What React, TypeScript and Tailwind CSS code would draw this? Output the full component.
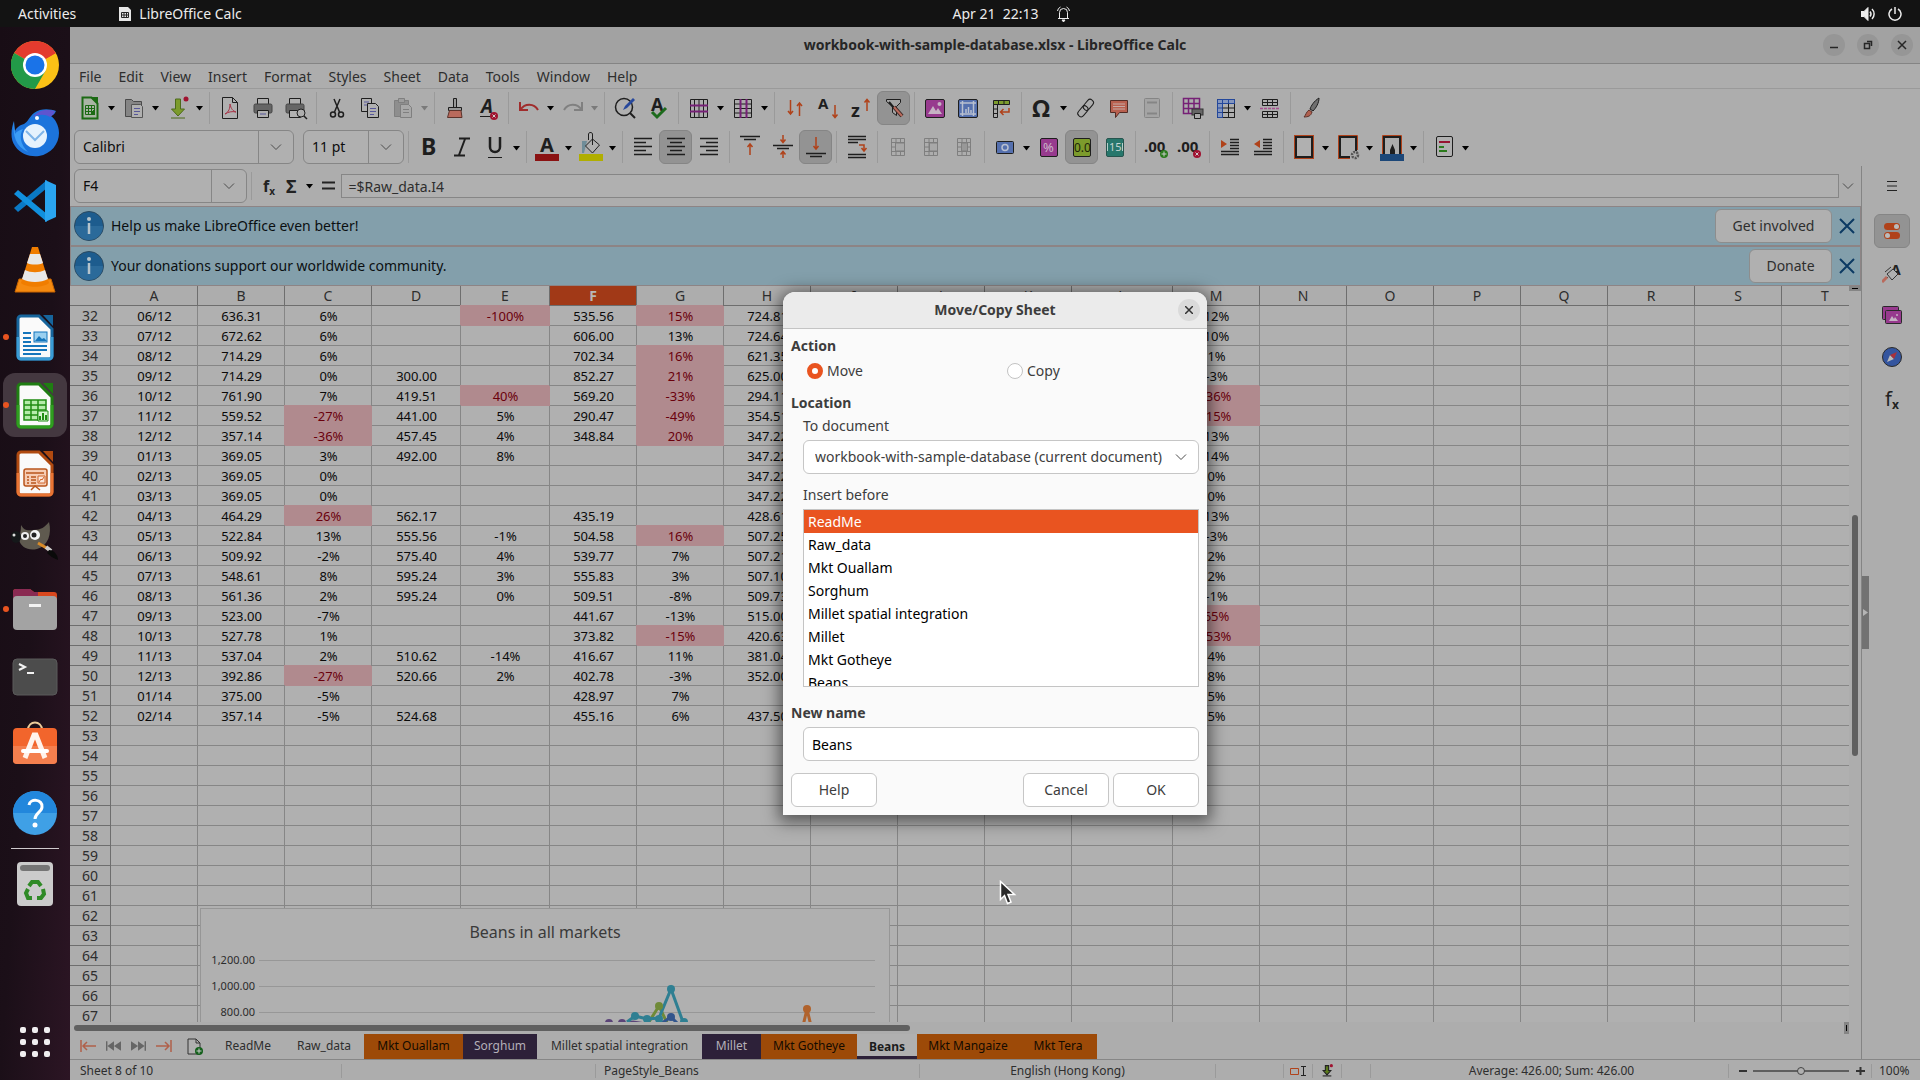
import { Fragment, ReactNode } from 'react';

interface Tool {
  icon: string;
  label: string;
  menu?: boolean;
  active?: boolean;
  dim?: boolean;
}

interface SheetTab {
  name: string;
  width: string;
  style: string;
}

const INK = '#1e1e1e';
const RUST = '#b0421a';

const sheetGrid = (stroke: string) => (
  <path d="M5.5 3.5h13v17h-13zM5.5 7.5h13M5.5 12h13M5.5 16.500h13M10 3.5v17M14.500 3.5v17" fill="none" stroke={stroke} />
);

const icons: Record<string, ReactNode> = {
  new: (
    <>
      <path d="M4.500 1.500h9l6 6v15h-15z" fill="#a9b5a4" stroke="#1c6a14" strokeWidth="2" />
      <path d="M12 1l8 7V1z" fill="#1c6a14" />
      <path d="M7.500 9.500h9v9h-9zM7.500 12.500h9M7.500 15.500h9M10.500 9.500v9M13.500 9.500v9" fill="none" stroke="#1c6a14" />
      <path d="M13 19v-3h2v-2h2v5z" fill="#1c6a14" />
    </>
  ),
  open: (
    <>
      <path d="M3.500 20.500v-17h6l2 2h8v15z" fill="#858585" stroke="#4a4a4a" />
      <path d="M9.500 8.500h9l2 2v11h-11z" fill="#b0b0b0" stroke="#555" />
      <path d="M12 12.500h6M12 15.500h6M12 18.500h4" stroke="#57579a" />
    </>
  ),
  save: (
    <>
      <path d="M9.500 3h5v10h4l-6.500 7-6.500-7h4z" fill="#7c9b2c" stroke="#4d6a1a" />
      <path d="M5 22h14" stroke="#4d6a1a" />
      <circle cx="20" cy="3" r="2.500" fill="#a01230" />
    </>
  ),
  pdf: (
    <>
      <path d="M4.500 1.500h10l5 5v16h-15z" fill="#b0b0b0" stroke={INK} />
      <path d="M14.500 1.500v5h5" fill="none" stroke={INK} />
      <path d="M7 18c4-2 5-6 5-10 1 5 3 7 6 8-4-1-8 0-11 2z" fill="none" stroke="#a83246" />
    </>
  ),
  print: (
    <>
      <path d="M6.500 8V2.500h11V8" fill="#b0b0b0" stroke={INK} />
      <rect x="3" y="8" width="18" height="9" rx="1.500" fill="#666" stroke="#444" />
      <path d="M6.500 14.500h11v7h-11z" fill="#b0b0b0" stroke={INK} />
      <path d="M9 18h6" stroke="#57579a" />
    </>
  ),
  preview: (
    <>
      <path d="M5.500 8V2.500h11V8" fill="#b0b0b0" stroke={INK} />
      <rect x="2" y="8" width="18" height="9" rx="1.500" fill="#666" stroke="#444" />
      <path d="M5.500 14.500h11v7h-11z" fill="#b0b0b0" stroke={INK} />
      <circle cx="17" cy="17" r="4" fill="#adadad" stroke={INK} />
      <path d="M20 20l3 3" stroke={INK} strokeWidth="1.500" />
    </>
  ),
  cut: (
    <g fill="none" stroke={INK} strokeWidth="1.500">
      <path d="M9 3l5.500 13M15 3L9.500 16" />
      <circle cx="8" cy="18.500" r="2.500" />
      <circle cx="16" cy="18.500" r="2.500" />
    </g>
  ),
  copy: (
    <>
      <path d="M3.500 2.500h10v13h-10z" fill="#b0b0b0" stroke={INK} />
      <path d="M6 6h5M6 9h3" stroke="#57579a" />
      <path d="M9.500 7.500h8l3 3v11h-11z" fill="#b0b0b0" stroke={INK} />
      <path d="M12 12.500h6M12 15.500h6M12 18.500h4" stroke="#57579a" />
    </>
  ),
  paste: (
    <g stroke="#7f7f7f">
      <path d="M3.500 4.500h14v16h-14z" fill="#8e8e8e" />
      <path d="M7.500 2.500h6v4h-6z" fill="#9d9d9d" />
      <path d="M9.500 8.500h8l3 3v10h-11z" fill="#a8a8a8" />
      <path d="M12 13.500h6M12 16.500h6" />
    </g>
  ),
  brush: (
    <>
      <path d="M10.500 2.500h3v9h-3z" fill="#999" stroke={INK} />
      <path d="M5.500 11.500h13v3h-13z" fill="#999" stroke={INK} />
      <path d="M6.500 14.500h11.500l1 7H4.500z" fill="#b96a5c" stroke="#5c332b" />
    </>
  ),
  clear: (
    <>
      <text x="5" y="17" fontSize="19" fontWeight="700" fontStyle="italic" fill={INK}>A</text>
      <path d="M4 20.500h12" stroke={INK} />
      <circle cx="18" cy="20" r="4" fill="#a01230" />
      <path d="M16.500 18.500l3 3m0-3l-3 3" stroke="#ccc" />
    </>
  ),
  undo: <path d="M3 6v8h8M3.500 13.500C8 7 17 7 21 14" fill="none" stroke="#a02c2c" strokeWidth="2" />,
  redo: <path d="M21 6v8h-8M20.500 13.500C16 7 7 7 3 14" fill="none" stroke="#808080" strokeWidth="2" />,
  find: (
    <>
      <circle cx="11" cy="11" r="8.500" fill="#b0b0b0" stroke={INK} strokeWidth="1.500" />
      <path d="M17 17l5 5" stroke={INK} strokeWidth="2" />
      <path d="M10 14l2-4 8-8 2 2-8 8z" fill="#27489c" />
    </>
  ),
  spell: (
    <>
      <text x="5" y="15" fontSize="18" fontWeight="700" fill={INK}>A</text>
      <path d="M6 16l5 5 9-9" fill="none" stroke="#1d6b1d" strokeWidth="3" />
    </>
  ),
  rows: (
    <>
      <path d="M3.500 3.500h17v18h-17zM7.500 3.500v18M12 3.500v18M16.500 3.500v18" fill="none" stroke={INK} />
      <path d="M3 9.500h18M3 15.500h18" stroke="#762076" strokeWidth="2" />
    </>
  ),
  cols: (
    <>
      <path d="M3.500 3.500h17v18h-17zM3.500 8h17M3.500 12.500h17M3.500 17h17" fill="none" stroke={INK} />
      <path d="M9.500 3v19M15.500 3v19" stroke="#762076" strokeWidth="2" />
    </>
  ),
  sort: <path d="M7.500 4v14M5 15l2.500 3 2.500-3M16.500 20V7M14 10l2.500-3 2.500 3" fill="none" stroke={RUST} strokeWidth="1.500" />,
  asc: (
    <>
      <text x="2" y="13" fontSize="15" fontWeight="700" fill={INK}>A</text>
      <path d="M19 9v13M16.500 18.500l2.500 3 2.500-3" fill="none" stroke={RUST} strokeWidth="1.500" />
    </>
  ),
  desc: (
    <>
      <text x="2" y="21" fontSize="18" fontWeight="700" fill={INK}>z</text>
      <path d="M18 15V3M15.500 6.500l2.500-3 2.500 3" fill="none" stroke={RUST} strokeWidth="1.500" />
    </>
  ),
  filter: (
    <>
      <path d="M4.500 3.500h14v3l-4 4v9l-4-3v-6l-6-5z" fill="#a5a5a5" stroke={INK} />
      <path d="M7 6l5 6" stroke={INK} strokeWidth="2" />
      <path d="M12 11l8 9" stroke="#3b2724" strokeWidth="4" />
      <path d="M12 11l8 9" stroke="#b96a5c" strokeWidth="2" />
    </>
  ),
  image: (
    <>
      <rect x="2.500" y="3.500" width="19" height="18" rx="1.500" fill="#973a8e" stroke={INK} />
      <path d="M5 18l5-8 3 5 2-3 4 6z" fill="#c5b2c3" />
      <circle cx="16.500" cy="8" r="2" fill="#c5b2c3" />
    </>
  ),
  chart: (
    <>
      <rect x="2.500" y="3.500" width="19" height="18" rx="1.500" fill="#5570ae" stroke={INK} />
      <path d="M4 7h16M4 18h16M6.500 5v15M17.500 5v15M10 17v-4M12.500 17v-6M15 17v-3" stroke="#b9c0d0" strokeWidth="1.500" />
    </>
  ),
  pivot: (
    <>
      <path d="M4.500 4.500h16v4h-16z" fill="#7c9b2c" stroke={INK} />
      <path d="M4.500 8.500h4v13h-4zM4.500 13h4M4.500 17.500h4M9.500 4.500v4M15 4.500v4" fill="none" stroke={INK} />
      <path d="M20 12v4h-8M14.500 13l-3 3 3 3" fill="none" stroke={RUST} strokeWidth="1.500" />
    </>
  ),
  omega: <text x="2" y="21" fontSize="24" fontWeight="700" fill={INK}>Ω</text>,
  link: (
    <g transform="rotate(-50 12 12)" fill="none" stroke={INK}>
      <rect x="1.500" y="8.500" width="12" height="6.500" rx="3" />
      <rect x="10" y="8.500" width="12" height="6.500" rx="3" />
    </g>
  ),
  comment: (
    <>
      <path d="M3.500 4.500h17v12h-8l-4 5v-5h-5z" fill="#b8604f" stroke="#522c25" />
      <path d="M6 8h12M6 10.500h12M6 13h12" stroke="#c5aaa5" />
    </>
  ),
  headfoot: (
    <g stroke="#858585" fill="none">
      <rect x="4.500" y="2.500" width="15" height="19" rx="1" fill="#a4a4a4" />
      <path d="M7 6.500h10M7 17.500h10" strokeWidth="2" />
    </g>
  ),
  printarea: (
    <>
      <path d="M2.500 2.500h16v15h-16zM2.500 7.500h16M2.500 12.500h16M7.500 2.500v15M13 2.500v15" fill="none" stroke="#762076" strokeWidth="1.500" />
      <rect x="11" y="13" width="11" height="6" fill="#666" stroke="#333" />
      <path d="M13.500 17.500h6v5h-6z" fill="#aaa" stroke={INK} />
    </>
  ),
  freeze: (
    <>
      <rect x="3.500" y="3.500" width="17" height="18" fill="#b0b0b0" stroke={INK} />
      <path d="M3.500 3.500h17v4h-17zM3.500 7.500h5v14h-5z" fill="#8496be" stroke="#24489c" />
      <path d="M8.500 12h12M8.500 16.500h12M14.500 7.500v14" stroke={INK} />
      <path d="M3.500 12h5M3.500 16.500h5M8.500 3.500v4M14.500 3.500v4" stroke="#24489c" />
    </>
  ),
  split: (
    <>
      <path d="M4.500 3.500h15v6h-15zM9.500 3.500v6M14.500 3.500v6M4.500 6.500h15M4.500 15.500h15v6h-15zM9.500 15.500v6M14.500 15.500v6M4.500 18.500h15" fill="none" stroke={INK} />
      <path d="M2 12.500h20" stroke="#a7508f" strokeDasharray="3 1" strokeWidth="1.500" />
    </>
  ),
  draw: (
    <>
      <path d="M20 2c-5 3-8 8-9 11l3 2c3-3 6-8 6-13z" fill="#707070" stroke={INK} />
      <path d="M10 14l3 2c-1 4-4 5-8 5 2-2 2-5 5-7z" fill="#b0604f" stroke="#5c332b" />
    </>
  ),
  bold: <text x="4" y="20" fontSize="23" fontWeight="700" fill={INK}>B</text>,
  italic: <path d="M9 3.500h11M4 20.500h11M15 4l-6 16" stroke={INK} strokeWidth="2" />,
  underline: (
    <>
      <path d="M7 2v10a5 5 0 0 0 10 0V2" fill="none" stroke={INK} strokeWidth="2.500" />
      <path d="M5 22.500h14" stroke={INK} />
    </>
  ),
  fontcolor: (
    <>
      <text x="5" y="17" fontSize="20" fontWeight="700" fill={INK}>A</text>
      <path d="M0 19h24v7H0z" fill="#8a1212" />
    </>
  ),
  fill: (
    <>
      <path d="M3 6h5l-3 12H3z" fill="#6f8d99" />
      <path d="M6.500 11l7-7 7 6-7 8zM13.500 10V0a2 2 0 0 0-4-1v6" fill="#b0b0b0" stroke={INK} />
      <path d="M0 19h24v7H0z" fill="#b0ae00" />
    </>
  ),
  left: <path d="M3 3.500h18M3 7.500h12M3 11.500h18M3 15.500h12M3 19.500h18" stroke={INK} strokeWidth="1.500" />,
  center: <path d="M3 3.500h18M6 7.500h12M3 11.500h18M6 15.500h12M3 19.500h18" stroke={INK} strokeWidth="1.500" />,
  right: <path d="M3 3.500h18M9 7.500h12M3 11.500h18M9 15.500h12M3 19.500h18" stroke={INK} strokeWidth="1.500" />,
  top: (
    <>
      <path d="M2 1.500h20M6 4.500h12" stroke={INK} strokeWidth="1.500" />
      <path d="M12 20V9M9.500 12l2.500-3 2.500 3" fill="none" stroke={RUST} strokeWidth="1.500" />
    </>
  ),
  middle: (
    <>
      <path d="M2 10.500h20M6 13.500h12" stroke={INK} strokeWidth="1.500" />
      <path d="M12 0v7M9.500 4.500l2.500 3 2.500-3M12 23v-6M9.500 19.500l2.500-3 2.500 3" fill="none" stroke={RUST} strokeWidth="1.500" />
    </>
  ),
  bottom: (
    <>
      <path d="M2 18.500h20M6 21.500h12" stroke={INK} strokeWidth="1.500" />
      <path d="M12 2v12M9.500 11l2.500 3 2.500-3" fill="none" stroke={RUST} strokeWidth="1.500" />
    </>
  ),
  wrap: (
    <>
      <path d="M3 1.500h18M3 4.500h18M3 7.500h10M3 19.500h18M3 22.500h18" stroke={INK} strokeWidth="1.500" />
      <path d="M14 10h5v5M16.500 13l2.500 3 2.500-3" fill="none" stroke={RUST} strokeWidth="1.500" />
    </>
  ),
  merge1: (
    <>
      {sheetGrid('#7f7f7f')}
      <path d="M9.500 8h9v8h-9z" fill="#a8a8a8" stroke="#7f7f7f" />
    </>
  ),
  merge2: (
    <>
      {sheetGrid('#7f7f7f')}
      <path d="M10.500 8h8v8h-8z" fill="#a8a8a8" stroke="#7f7f7f" />
    </>
  ),
  merge3: (
    <>
      {sheetGrid('#7f7f7f')}
      <path d="M9.500 8h6v8h-6z" fill="#989898" stroke="#7f7f7f" />
    </>
  ),
  currency: (
    <>
      <rect x="3.500" y="6.500" width="17" height="12" rx="1" fill="#5570ae" stroke={INK} />
      <circle cx="12" cy="12.500" r="3" fill="none" stroke="#b9c0d0" strokeWidth="1.500" />
    </>
  ),
  percent: (
    <>
      <rect x="3.500" y="3.500" width="17" height="18" rx="1.500" fill="#973a8e" stroke={INK} />
      <text x="6" y="17" fontSize="13" fill="#c9b6c7">%</text>
    </>
  ),
  number: (
    <>
      <rect x="3.500" y="3.500" width="17" height="18" rx="1.500" fill="#7c9b2c" stroke={INK} />
      <text x="4" y="17" fontSize="12" fill="#1c2408">0.0</text>
    </>
  ),
  date: (
    <>
      <rect x="3.500" y="3.500" width="17" height="18" rx="1.500" fill="#27776c" stroke="#27554e" />
      <path d="M4.500 8v8M19.500 8v8" stroke="#b5cfcb" />
      <text x="6" y="16" fontSize="11" fill="#c5d5d2">15</text>
    </>
  ),
  adddec: (
    <>
      <text x="0" y="17" fontSize="15" fontWeight="700" fill={INK}>.00</text>
      <circle cx="20" cy="19" r="4" fill="#2b7a1c" />
      <path d="M17.500 19h5M20 16.500v5" stroke="#ccc" />
    </>
  ),
  deldec: (
    <>
      <text x="0" y="17" fontSize="15" fontWeight="700" fill={INK}>.00</text>
      <circle cx="20" cy="19" r="4" fill="#a01230" />
      <path d="M18.500 17.500l3 3m0-3l-3 3" stroke="#ccc" />
    </>
  ),
  indent: (
    <>
      <path d="M12 4.500h9M12 7.500h9M12 10.500h9M12 13.500h9M3 16.500h18M3 19.500h18" stroke={INK} strokeWidth="1.500" />
      <path d="M3 5l6 4-6 4z" fill={RUST} />
    </>
  ),
  outdent: (
    <>
      <path d="M12 4.500h9M12 7.500h9M12 10.500h9M12 13.500h9M3 16.500h18M3 19.500h18" stroke={INK} strokeWidth="1.500" />
      <path d="M9 5L3 9l6 4z" fill={RUST} />
    </>
  ),
  borders: (
    <>
      <rect x="2" y="0" width="20" height="24" fill={RUST} />
      <rect x="4" y="2" width="16" height="20" fill="#b0b0b0" stroke={INK} strokeWidth="2" />
    </>
  ),
  bstyle: (
    <>
      <path d="M2.500 24V.500h19V15M2 23.500h12" fill="none" stroke={RUST} />
      <path d="M4 22V2h16v14M3 22h11" fill="none" stroke={INK} strokeWidth="2" />
      <circle cx="19" cy="20" r="3" fill="none" stroke="#555" strokeWidth="2.500" strokeDasharray="2 1" />
    </>
  ),
  bcolor: (
    <>
      <path d="M2.500 19V.500h19V19" fill="none" stroke={RUST} />
      <path d="M4 19V2h16v17" fill="none" stroke={INK} strokeWidth="2" />
      <path d="M12.500 9l2.500 6v4h-5v-4z" fill={INK} />
      <path d="M0 19h24v7H0z" fill="#1c4778" />
    </>
  ),
  cond: (
    <>
      <rect x="4.500" y="1.500" width="16" height="20" rx="1.500" fill="#b0b0b0" stroke={INK} />
      <path d="M7 7h11" stroke="#961230" strokeWidth="2" />
      <path d="M7 12h5M7 16h8" stroke="#2b7a1c" strokeWidth="2" />
    </>
  ),
};

const mainTools: (Tool | null)[] = [
  { icon: 'new', label: 'New', menu: true },
  { icon: 'open', label: 'Open', menu: true },
  { icon: 'save', label: 'Save', menu: true },
  null,
  { icon: 'pdf', label: 'Export as PDF' },
  { icon: 'print', label: 'Print' },
  { icon: 'preview', label: 'Print Preview' },
  null,
  { icon: 'cut', label: 'Cut' },
  { icon: 'copy', label: 'Copy' },
  { icon: 'paste', label: 'Paste', menu: true, dim: true },
  null,
  { icon: 'brush', label: 'Clone Formatting' },
  { icon: 'clear', label: 'Clear Formatting' },
  null,
  { icon: 'undo', label: 'Undo', menu: true },
  { icon: 'redo', label: 'Redo', menu: true, dim: true },
  null,
  { icon: 'find', label: 'Find and Replace' },
  { icon: 'spell', label: 'Spelling' },
  null,
  { icon: 'rows', label: 'Row', menu: true },
  { icon: 'cols', label: 'Column', menu: true },
  null,
  { icon: 'sort', label: 'Sort' },
  { icon: 'asc', label: 'Sort Ascending' },
  { icon: 'desc', label: 'Sort Descending' },
  { icon: 'filter', label: 'AutoFilter', active: true },
  null,
  { icon: 'image', label: 'Insert Image' },
  { icon: 'chart', label: 'Insert Chart' },
  { icon: 'pivot', label: 'Pivot Table' },
  null,
  { icon: 'omega', label: 'Special Character', menu: true },
  { icon: 'link', label: 'Hyperlink' },
  { icon: 'comment', label: 'Comment' },
  { icon: 'headfoot', label: 'Headers and Footers' },
  null,
  { icon: 'printarea', label: 'Define Print Area' },
  { icon: 'freeze', label: 'Freeze Rows and Columns', menu: true },
  { icon: 'split', label: 'Split Window' },
  null,
  { icon: 'draw', label: 'Show Draw Functions' },
];

const formatTools: (Tool | null)[] = [
  null,
  { icon: 'bold', label: 'Bold' },
  { icon: 'italic', label: 'Italic' },
  { icon: 'underline', label: 'Underline', menu: true },
  null,
  { icon: 'fontcolor', label: 'Font Color', menu: true },
  { icon: 'fill', label: 'Background Color', menu: true },
  null,
  { icon: 'left', label: 'Align Left' },
  { icon: 'center', label: 'Center Horizontally', active: true },
  { icon: 'right', label: 'Align Right' },
  null,
  { icon: 'top', label: 'Align Top' },
  { icon: 'middle', label: 'Center Vertically' },
  { icon: 'bottom', label: 'Align Bottom', active: true },
  null,
  { icon: 'wrap', label: 'Wrap Text' },
  null,
  { icon: 'merge1', label: 'Merge and Center' },
  { icon: 'merge2', label: 'Merge Cells' },
  { icon: 'merge3', label: 'Unmerge Cells' },
  null,
  { icon: 'currency', label: 'Currency', menu: true },
  { icon: 'percent', label: 'Percent' },
  { icon: 'number', label: 'Number', active: true },
  { icon: 'date', label: 'Date' },
  null,
  { icon: 'adddec', label: 'Add Decimal Place' },
  { icon: 'deldec', label: 'Delete Decimal Place' },
  null,
  { icon: 'indent', label: 'Increase Indent' },
  { icon: 'outdent', label: 'Decrease Indent' },
  null,
  { icon: 'borders', label: 'Borders', menu: true },
  { icon: 'bstyle', label: 'Border Style', menu: true },
  { icon: 'bcolor', label: 'Border Color', menu: true },
  null,
  { icon: 'cond', label: 'Conditional', menu: true },
];

const menus = ['File', 'Edit', 'View', 'Insert', 'Format', 'Styles', 'Sheet', 'Data', 'Tools', 'Window', 'Help'];

const columns = 'ABCDEFGHIJKLMNOPQRST'.split('');

// A..H, then M; a leading "!" marks a conditionally highlighted cell
const rows: string[][] = [
  ['06/12', '636.31', '6%', '', '!-100%', '535.56', '!15%', '724.81', '12%'],
  ['07/12', '672.62', '6%', '', '', '606.00', '13%', '724.64', '10%'],
  ['08/12', '714.29', '6%', '', '', '702.34', '!16%', '621.35', '1%'],
  ['09/12', '714.29', '0%', '300.00', '', '852.27', '!21%', '625.00', '-3%'],
  ['10/12', '761.90', '7%', '419.51', '!40%', '569.20', '!-33%', '294.11', '!-36%'],
  ['11/12', '559.52', '!-27%', '441.00', '5%', '290.47', '!-49%', '354.51', '!-15%'],
  ['12/12', '357.14', '!-36%', '457.45', '4%', '348.84', '!20%', '347.22', '13%'],
  ['01/13', '369.05', '3%', '492.00', '8%', '', '', '347.22', '14%'],
  ['02/13', '369.05', '0%', '', '', '', '', '347.22', '0%'],
  ['03/13', '369.05', '0%', '', '', '', '', '347.22', '0%'],
  ['04/13', '464.29', '!26%', '562.17', '', '435.19', '', '428.61', '13%'],
  ['05/13', '522.84', '13%', '555.56', '-1%', '504.58', '!16%', '507.25', '-3%'],
  ['06/13', '509.92', '-2%', '575.40', '4%', '539.77', '7%', '507.21', '2%'],
  ['07/13', '548.61', '8%', '595.24', '3%', '555.83', '3%', '507.10', '2%'],
  ['08/13', '561.36', '2%', '595.24', '0%', '509.51', '-8%', '509.73', '-1%'],
  ['09/13', '523.00', '-7%', '', '', '441.67', '-13%', '515.00', '!65%'],
  ['10/13', '527.78', '1%', '', '', '373.82', '!-15%', '420.63', '!-53%'],
  ['11/13', '537.04', '2%', '510.62', '-14%', '416.67', '11%', '381.04', '4%'],
  ['12/13', '392.86', '!-27%', '520.66', '2%', '402.78', '-3%', '352.00', '8%'],
  ['01/14', '375.00', '-5%', '', '', '428.97', '7%', '', '5%'],
  ['02/14', '357.14', '-5%', '524.68', '', '455.16', '6%', '437.50', '5%'],
];

const ORANGE_TAB = 'bg-[#9d4a08] text-[#140a00]';
const PURPLE_TAB = 'bg-[#2d2139] text-[#b4b0b8]';

const sheetTabs: SheetTab[] = [
  { name: 'ReadMe', width: 'w-[72px]', style: '' },
  { name: 'Raw_data', width: 'w-[80px]', style: '' },
  { name: 'Mkt Ouallam', width: 'w-[99px]', style: ORANGE_TAB },
  { name: 'Sorghum', width: 'w-[74px]', style: PURPLE_TAB },
  { name: 'Millet spatial integration', width: 'w-[165px]', style: '' },
  { name: 'Millet', width: 'w-[59px]', style: PURPLE_TAB },
  { name: 'Mkt Gotheye', width: 'w-[96px]', style: ORANGE_TAB },
  { name: 'Beans', width: 'w-[60px]', style: 'border-b-3 border-[#2d2139] bg-[#b0b0b0] pt-[3px] font-bold text-[#1c1c1c]' },
  { name: 'Mkt Mangaize', width: 'w-[102px]', style: ORANGE_TAB },
  { name: 'Mkt Tera', width: 'w-[78px]', style: ORANGE_TAB },
];

const insertBefore = ['ReadMe', 'Raw_data', 'Mkt Ouallam', 'Sorghum', 'Millet spatial integration', 'Millet', 'Mkt Gotheye', 'Beans'];

const officeDoc = (main: string, light: string, body: ReactNode) => (
  <>
    <path d="M10 3h18l13 13v27a3 3 0 0 1-3 3H10a3 3 0 0 1-3-3V6a3 3 0 0 1 3-3z" fill="#fafafa" stroke={main} strokeWidth="3" />
    <path d="M7 24v19a3 3 0 0 0 3 3h28a3 3 0 0 0 3-3V24" fill="none" stroke={light} strokeWidth="3" />
    <path d="M32 2h10v11z" fill={main} />
    {body}
  </>
);

const dockApps: { name: string; art: ReactNode; dot?: boolean; active?: boolean }[] = [
  {
    name: 'Google Chrome',
    art: (
      <>
        <circle cx="24" cy="24" r="24" fill="#fbc116" />
        <path d="M24 24L3.200 12A24 24 0 0 1 44.800 12z" fill="#e33b2e" />
        <path d="M24 24L3.200 12A24 24 0 0 0 24 48l10.400-18z" fill="#229a48" />
        <path d="M24 12h20.800L24 24z" fill="#e33b2e" />
        <circle cx="24" cy="24" r="12" fill="#fff" />
        <circle cx="24" cy="24" r="9.500" fill="#1a73e8" />
      </>
    ),
  },
  {
    name: 'Thunderbird',
    art: (
      <>
        <path d="M3 12c-3 8-4 18 1 25 6 9 16 11 24 10 12-2 20-12 20-23 0-8-4-14-8-17 3-1 4-3 5-5-6-2-15-3-22 2-5 4-6 9-10 11-4 1-8 4-9 7-1-3-1-6-1-10z" fill="#1c74dc" />
        <path d="M22 8c6-8 15-8 22-6-1 3-3 5-5 6-5-3-11-3-17 0z" fill="#5f55cf" />
        <path d="M3 12c-2 14 2 26 14 31-8-8-9-17-5-23-4 1-7 3-8 5z" fill="#3b9cf5" />
        <circle cx="24" cy="27" r="12" fill="#e6f2fd" />
        <path d="M15 22l9 9 9-9" fill="none" stroke="#7fb4e8" strokeWidth="2" />
        <circle cx="26" cy="9" r="2" fill="#fff" />
      </>
    ),
  },
  {
    name: 'Visual Studio Code',
    art: (
      <>
        <path d="M3 31l4 4 29-24V3z" fill="#0a78c4" />
        <path d="M3 17l4-4 29 24v8z" fill="#1190de" />
        <path d="M34 3l11 5v32l-11 5z" fill="#2aa5f0" />
      </>
    ),
  },
  {
    name: 'VLC media player',
    art: (
      <>
        <path d="M8 34h32l4 13H4z" fill="#f58a10" stroke="#c96500" />
        <path d="M21 2h6l11 36c-6 5-22 5-28 0z" fill="#f07d00" />
        <path d="M19 9h10l3 9c-4 2-12 2-16 0zM14 25c6 3 14 3 20 0l3 9c-7 4-19 4-26 0z" fill="#e8e8e8" />
      </>
    ),
  },
  {
    name: 'LibreOffice Writer',
    dot: true,
    art: officeDoc('#16659c', '#3a9bd4', (
      <>
        <path d="M12 20h8M12 25h8M12 29h8M12 33h24M12 37h24M12 41h18" stroke="#1575bb" strokeWidth="2" />
        <rect x="23" y="19" width="13" height="10" fill="#9bd0f0" stroke="#1575bb" />
        <path d="M24 28l4-5 3 3 2-1 3 3z" fill="#1575bb" />
      </>
    )),
  },
  {
    name: 'LibreOffice Calc',
    dot: true,
    active: true,
    art: officeDoc('#1f7d12', '#2f9e1f', (
      <>
        <path d="M13 19h22v20H13zM13 24h22M13 29h22M13 34h22M20 19v20M27 19v20" fill="#b5ecaa" stroke="#1f8c12" strokeWidth="1.500" />
        <path d="M27 30h10v10H27z" fill="#d5f5ce" stroke="#1f8c12" />
        <path d="M29 39v-4M32 39v-7M35 39v-5" stroke="#1f8c12" strokeWidth="2" />
      </>
    )),
  },
  {
    name: 'LibreOffice Impress',
    art: officeDoc('#b04a10', '#e87434', (
      <>
        <rect x="13" y="20" width="23" height="17" rx="2" fill="#f6cdb5" stroke="#b9551c" strokeWidth="1.500" />
        <path d="M15 24h18M16 28h2M20 28h5M16 31h2M20 31h5M16 34h2M20 34h5M20 41l4-4 5 4" fill="none" stroke="#b9551c" strokeWidth="1.500" />
        <path d="M27 27h7v7h-7zM28 33l2-3 1 1 2-3" fill="#fbe6da" stroke="#d0642a" />
      </>
    )),
  },
  {
    name: 'GIMP',
    art: (
      <>
        <path d="M10 8c3 5 6 6 12 5 8 0 12-3 16-8 3 12-1 24-12 27-9 2-16-2-18-9 1-6 2-9 2-15z" fill="#5f5a4f" />
        <ellipse cx="5" cy="20" rx="5" ry="6" fill="#15181a" />
        <circle cx="3" cy="18" r="1.500" fill="#ddd" />
        <circle cx="14" cy="19" r="4" fill="#eee" />
        <circle cx="14" cy="19" r="2" fill="#222" />
        <circle cx="24" cy="18" r="5" fill="#f4f4f4" />
        <circle cx="23" cy="18" r="2.500" fill="#222" />
        <path d="M27 26l12 7" stroke="#d98b28" strokeWidth="3" />
        <path d="M35 30l5 4" stroke="#ccc" strokeWidth="4" />
        <path d="M38 33c5 0 9 5 9 10-5-2-8-4-11-7z" fill="#0a0a0a" />
      </>
    ),
  },
  {
    name: 'Files',
    dot: true,
    art: (
      <>
        <path d="M2 12V7a3 3 0 0 1 3-3h14l4 3h20a3 3 0 0 1 3 3v6H2z" fill="#d9481e" />
        <path d="M2 12V7a3 3 0 0 1 3-3h14l4 3h4v9H2z" fill="#8a2a52" />
        <rect x="2" y="11" width="44" height="34" rx="4" fill="#a3a3a3" />
        <rect x="18" y="19" width="12" height="3" fill="#f2f2f2" />
      </>
    ),
  },
  {
    name: 'Terminal',
    art: (
      <>
        <rect x="2" y="6" width="44" height="36" rx="4" fill="#4c4c4c" stroke="#5a5a5a" />
        <path d="M8 11l6 3-6 3M16 20h7" fill="none" stroke="#f2f2f2" strokeWidth="2" />
      </>
    ),
  },
  {
    name: 'Ubuntu Software',
    art: (
      <>
        <path d="M17 9c0-10 14-10 14 0" fill="none" stroke="#eccb9a" strokeWidth="2" />
        <rect x="2" y="7" width="44" height="36" rx="4" fill="#f2652c" />
        <path d="M2 25h44v14a4 4 0 0 1-4 4H6a4 4 0 0 1-4-4z" fill="#f47f4e" />
        <path d="M14 37l9-23h2l9 23" fill="none" stroke="#fff3ec" strokeWidth="5" />
        <path d="M12 30h24" stroke="#fff" strokeWidth="4" strokeLinecap="round" />
      </>
    ),
  },
  {
    name: 'Help',
    art: (
      <>
        <circle cx="24" cy="24" r="22" fill="#3fa0e6" />
        <path d="M2 24a22 22 0 0 1 44 0z" fill="#2287dc" />
        <path d="M18 16c1-7 14-6 13 2 0 5-7 6-7 12" fill="none" stroke="#fff" strokeWidth="3" />
        <circle cx="24" cy="36" r="2.500" fill="#fff" />
      </>
    ),
  },
];

function ChevronDown() {
  return (
    <svg width="12" height="8" viewBox="0 0 12 8" fill="none" stroke="#4c4c4c">
      <path d="M1 1.500l5 5 5-5" />
    </svg>
  );
}

function Toolbar({ tools }: { tools: (Tool | null)[] }) {
  return (
    <>
      {tools.map((tool, i) =>
        tool === null ? (
          <span key={i} className="mr-[3px] ml-[4px] h-8 w-0 shrink-0 border-l border-[#9a9a9a]" />
        ) : (
          <Fragment key={tool.icon}>
            <button
              aria-label={tool.label}
              className={`flex h-[34px] w-[33px] shrink-0 items-center justify-center rounded-md ${tool.active ? 'border border-[#858585] bg-[#939393]' : ''}`}
            >
              <svg width="24" height="24" viewBox="0 0 24 24" overflow="visible">
                {icons[tool.icon]}
              </svg>
            </button>
            {tool.menu && (
              <button aria-label={`${tool.label} options`} className="flex h-[34px] w-[11px] shrink-0 items-center justify-center">
                <svg width="7" height="5" viewBox="0 0 7 5" className="mt-0.5">
                  <path d="M0 0h7L3.500 4.500z" fill={tool.dim ? '#7a7a7a' : '#000'} />
                </svg>
              </button>
            )}
          </Fragment>
        )
      )}
    </>
  );
}

function Combo({ label, value, width }: { label: string; value: string; width: string }) {
  return (
    <div className={`flex h-[34px] shrink-0 overflow-hidden rounded-md border border-[#868686] bg-[#b0b0b0] ${width}`}>
      <input aria-label={label} defaultValue={value} className="min-w-0 flex-1 bg-transparent px-2 text-[#0c0c0c] outline-none" />
      <button aria-label={`${label} list`} className="flex w-[35px] items-center justify-center border-l border-[#868686]">
        <ChevronDown />
      </button>
    </div>
  );
}

function InfoBar({ text, action, width }: { text: string; action: string; width: string }) {
  return (
    <div className="flex h-[40px] shrink-0 items-center border border-[#8d8485] bg-[#839fab] pr-[5px] pl-[3px] text-[#0b0f11]">
      <svg width="30" height="30" viewBox="0 0 30 30">
        <circle cx="15" cy="15" r="14.500" fill="#1d5c8e" stroke="#2c4a60" />
        <path d="M1 15a14 14 0 0 0 28 0z" fill="#2b6a9a" />
        <path d="M15 12v11" stroke="#b6c4cc" strokeWidth="2.500" />
        <circle cx="15" cy="8" r="2" fill="#b6c4cc" />
      </svg>
      <p className="ml-[7px] flex-1">{text}</p>
      <button className={`h-[34px] rounded-md border border-[#8d8d8d] bg-[#b0b0b0] text-[#2e2e2e] ${width}`}>{action}</button>
      <button aria-label="Close" className="ml-[7px]">
        <svg width="16" height="16" viewBox="0 0 16 16">
          <path d="M1 1l14 14M15 1L1 15" stroke="#0c3a63" strokeWidth="2" />
        </svg>
      </button>
    </div>
  );
}

function TopBar() {
  return (
    <header className="grid h-[27px] shrink-0 grid-cols-[1fr_auto_1fr] items-center bg-[#131313] text-[#ececec]">
      <div className="flex items-center pl-[18px]">
        <button>Activities</button>
        <button className="ml-[43px] flex items-center gap-2">
          <svg width="12" height="14" viewBox="0 0 12 14">
            <path d="M0 0h9l3 3v11H0z" fill="#e6e6e6" />
            <path d="M2.500 5.500h7v5h-7zM2.500 8h7M5 5.500v5M7.500 5.500v5" fill="none" stroke="#222" />
          </svg>
          LibreOffice Calc
        </button>
      </div>
      <button className="flex items-center gap-[18px] pl-[102px]">
        <span className="whitespace-pre">Apr 21  22:13</span>
        <svg width="13" height="16" viewBox="0 0 13 16" fill="none" stroke="#ececec">
          <path d="M1 12.500h11M2.500 12V6.500a4 4 0 0 1 8 0V12M.5 5a5 5 0 0 1 3-4M12.500 5a5 5 0 0 0-3-4" />
          <path d="M5 14h3l-1.500 2z" fill="#ececec" />
        </svg>
      </button>
      <div className="flex items-center justify-end gap-[12px] pr-[18px]">
        <svg width="15" height="14" viewBox="0 0 15 14" fill="none" stroke="#ececec">
          <path d="M0 4.500h3l4-4v13l-4-4H0z" fill="#ececec" />
          <path d="M9 4.500a4 4 0 0 1 0 5M11 2a7 7 0 0 1 0 10" strokeWidth="1.500" />
        </svg>
        <svg width="14" height="14" viewBox="0 0 14 14" fill="none" stroke="#ececec" strokeWidth="1.500">
          <path d="M4 2a6 6 0 1 0 6 0M7 0v7" />
        </svg>
      </div>
    </header>
  );
}

function Dock() {
  return (
    <nav aria-label="Dock" className="flex w-[70px] shrink-0 flex-col items-center bg-linear-to-br from-[#180d15] via-[#1b0f18] to-[#2c1524] pt-1">
      {dockApps.map((app) => (
        <button key={app.name} aria-label={app.name} className="relative flex h-[68px] w-full items-center justify-center">
          <span className={`flex size-16 items-center justify-center rounded-xl ${app.active ? 'bg-[#443840]' : ''}`}>
            <svg width="48" height="48" viewBox="0 0 48 48">
              {app.art}
            </svg>
          </span>
          {app.dot && <span className="absolute top-[31px] left-[3px] size-[6px] rounded-full bg-[#e95420]" />}
        </button>
      ))}
      <hr className="mt-px w-12 border-[#cfcacd]" />
      <button aria-label="Trash" className="mt-[11px]">
        <svg width="48" height="48" viewBox="0 0 48 48">
          <rect x="6" y="2" width="36" height="44" rx="4" fill="#cbcbcb" />
          <rect x="9" y="5" width="30" height="6" rx="3" fill="#757575" />
          <path d="M18 26l3-4h6l3 4M32 29l1 5-3 4h-4M21 38h-4l-2-5 2-4" fill="none" stroke="#2f8a26" strokeWidth="4" />
        </svg>
      </button>
      <button aria-label="Show Applications" className="mt-auto mb-[23px] grid grid-cols-3 gap-[6px]">
        {Array.from({ length: 9 }, (_, i) => (
          <span key={i} className="size-[6px] rounded-[2px] bg-[#f0eef0]" />
        ))}
      </button>
    </nav>
  );
}

function TitleBar() {
  return (
    <div className="grid h-[37px] shrink-0 grid-cols-[1fr_auto_1fr] items-center border-b border-[#848484] bg-[#a2a2a2] px-[7px]">
      <h1 className="col-start-2 font-bold text-[#262626]">workbook-with-sample-database.xlsx - LibreOffice Calc</h1>
      <div className="flex justify-end gap-[12px]">
        {['M8 14.500h8', 'M8.500 10.500h5v5h-5zM11 8.500h4.500v4.500', 'M8 8l8 8M16 8l-8 8'].map((d, i) => (
          <button key={d} aria-label={['Minimize', 'Restore', 'Close'][i]} className="size-[22px] rounded-full bg-[#969696]">
            <svg width="22" height="22" viewBox="1 1 22 22" fill="none" stroke="#262626" strokeWidth="1.500">
              <path d={d} />
            </svg>
          </button>
        ))}
      </div>
    </div>
  );
}

function FormulaBar() {
  return (
    <div className="flex h-[40px] shrink-0 items-center pl-1">
      <Combo label="Name Box" value="F4" width="w-[173px]" />
      <span className="mx-[4px] h-7 border-l border-[#9a9a9a]" />
      <button aria-label="Function Wizard" className="ml-[7px] w-[23px] text-left text-[16px] font-bold text-[#222]">
        f<sub className="text-[10px]">x</sub>
      </button>
      <button aria-label="Select Function" className="flex items-center gap-[10px] text-[18px] font-bold text-[#222]">
        Σ
        <svg width="7" height="5" viewBox="0 0 7 5">
          <path d="M0 0h7L3.500 4.500z" />
        </svg>
      </button>
      <button aria-label="Formula" className="ml-[9px]">
        <svg width="13" height="10" viewBox="0 0 13 10">
          <path d="M0 1.500h13M0 7.500h13" stroke="#222" strokeWidth="2" />
        </svg>
      </button>
      <input aria-label="Input line" defaultValue="=$Raw_data.I4" className="ml-[6px] h-[24px] min-w-0 flex-1 border border-[#868686] bg-[#b0b0b0] px-[6px] text-[#2e2e2e] outline-none" />
      <button aria-label="Expand Formula Bar" className="flex w-[22px] justify-center pr-1">
        <ChevronDown />
      </button>
    </div>
  );
}

function Cell({ value = '' }: { value?: string }) {
  const flagged = value.startsWith('!');
  return (
    <td
      className={`h-5 border-r border-b pt-px pr-0 pb-0 pl-px text-center text-[13px] leading-[18px] ${
        flagged
          ? 'border-[#b08a8e] bg-[#b08a8e] text-[#6a000c] shadow-[-1px_-1px_0_#b08a8e]'
          : 'border-[#868686] text-[#0a0a0a]'
      }`}
    >
      {flagged ? value.slice(1) : value}
    </td>
  );
}

function ChartBox() {
  return (
    <figure className="absolute top-[622px] left-[130px] h-[300px] w-[690px] border border-[#969696] bg-[#b0b0b0] text-[#3a3a3a]">
      <figcaption className="pt-[11px] text-center text-[16px] leading-6">Beans in all markets</figcaption>
      <svg width="688" height="120" viewBox="0 36 688 120" className="block">
        {['1,200.00', '1,000.00', '800.00'].map((label, i) => (
          <g key={label}>
            <text x="54" y={56 + i * 26} fontSize="11" textAnchor="end" fill="#2c2c2c">
              {label}
            </text>
            <path d={`M58 ${52.5 + i * 26}h616`} stroke="#979797" />
          </g>
        ))}
        <g fill="none" strokeWidth="3">
          <path d="M408 116l12 1 12-3 13 2" stroke="#5b4478" />
          <path d="M446 117l12-19 9 19" stroke="#6f8a38" />
          <path d="M458 117l12-8 10 10" stroke="#33558c" />
          <path d="M426 114l8-6 12 3 12-1 12-29 12 33" stroke="#2f7f92" />
          <path d="M602 118l4-17 4 17" stroke="#b0622c" />
        </g>
        <circle cx="408" cy="115" r="4" fill="#5b4478" />
        <circle cx="421" cy="115" r="4" fill="#5b4478" />
        <circle cx="458" cy="98" r="4" fill="#6f8a38" />
        <circle cx="470" cy="109" r="4" fill="#33558c" />
        <circle cx="434" cy="108" r="4" fill="#2f7f92" />
        <circle cx="446" cy="111" r="4" fill="#2f7f92" />
        <circle cx="458" cy="111" r="4" fill="#2f7f92" />
        <circle cx="470" cy="81" r="4" fill="#2f7f92" />
        <circle cx="483" cy="114" r="4" fill="#2f7f92" />
        <circle cx="606" cy="101" r="4" fill="#b0622c" />
      </svg>
    </figure>
  );
}

function SheetGrid() {
  return (
    <div className="flex min-h-0 flex-1">
      <div className="relative min-w-0 flex-1 overflow-hidden bg-[#b0b0b0]">
        <table className="w-[1787px] table-fixed border-separate border-spacing-0">
          <colgroup>
            <col className="w-[41px]" />
            {columns.map((c) => (
              <col key={c} className={c === 'D' || c === 'E' ? 'w-[89px]' : c === 'L' ? 'w-[101px]' : 'w-[87px]'} />
            ))}
          </colgroup>
          <thead>
            <tr className="h-5 bg-[#adadad] text-[14px] leading-[19px] text-[#2e2e2e]">
              <th className="border-r border-b border-[#6e6e6e] p-0" />
              {columns.map((c) => (
                <th
                  key={c}
                  scope="col"
                  className={`border-r border-b border-[#6e6e6e] p-0 ${c === 'F' ? 'bg-[#a13917] font-bold text-[#b8b8b8]' : 'font-normal'}`}
                >
                  {c}
                </th>
              ))}
            </tr>
          </thead>
          <tbody>
            {Array.from({ length: 36 }, (_, i) => {
              const row = rows[i] ?? [];
              return (
                <tr key={i} className="h-5">
                  <th scope="row" className="border-r border-b border-[#6e6e6e] bg-[#adadad] p-0 text-[14px] leading-[19px] font-normal text-[#2e2e2e]">
                    {i + 32}
                  </th>
                  {columns.map((c, j) => (
                    <Cell key={c} value={j < 8 ? row[j] : c === 'M' ? row[8] : ''} />
                  ))}
                </tr>
              );
            })}
          </tbody>
        </table>
        <ChartBox />
      </div>
      <div className="flex w-[12px] shrink-0 flex-col items-center">
        <span className="flex h-[5px] w-full items-center justify-center bg-[#858585]">
          <span className="h-px w-[6px] bg-black" />
        </span>
        <span className="mt-[224px] h-[241px] w-[6px] rounded-full bg-[#606060]" />
      </div>
    </div>
  );
}

function SheetTabs() {
  return (
    <div className="flex h-[25px] shrink-0 items-stretch text-[12px] text-[#2e2e2e]">
      <div className="flex w-[142px] items-center gap-[10px] pb-px pl-[10px]">
        <button aria-label="First sheet">
          <svg width="16" height="12" viewBox="0 0 16 12" fill="none" stroke="#b0604a" strokeWidth="1.500">
            <path d="M1 0v12M3 6h13M7 2L3 6l4 4" />
          </svg>
        </button>
        <button aria-label="Previous sheet">
          <svg width="15" height="10" viewBox="0 0 16 10" fill="#666">
            <path d="M0 0h1.500v10H0zM8.500 0v10L1.500 5zM16 0v10L8.500 5z" />
          </svg>
        </button>
        <button aria-label="Next sheet">
          <svg width="15" height="10" viewBox="0 0 16 10" fill="#666">
            <path d="M16 0h-1.500v10H16zM7.500 0v10l7-5zM0 0v10l7.500-5z" />
          </svg>
        </button>
        <button aria-label="Last sheet">
          <svg width="16" height="12" viewBox="0 0 16 12" fill="none" stroke="#b0604a" strokeWidth="1.500">
            <path d="M15 0v12M13 6H0M9 2l4 4-4 4" />
          </svg>
        </button>
        <button aria-label="Add sheet" className="ml-[5px]">
          <svg width="16" height="17" viewBox="0 0 16 17">
            <path d="M1 1h8l4 4v11H1z" fill="#b0b0b0" stroke="#333" />
            <path d="M9 1v4h4" fill="none" stroke="#333" />
            <circle cx="12" cy="13" r="4" fill="#14601c" />
            <path d="M9.500 13h5M12 10.500v5" stroke="#ccc" />
          </svg>
        </button>
      </div>
      {sheetTabs.map((tab) => (
        <button key={tab.name} className={`shrink-0 pb-0.5 text-center whitespace-nowrap ${tab.width} ${tab.style}`}>
          {tab.name}
        </button>
      ))}
    </div>
  );
}

function SideBar() {
  return (
    <aside className="relative flex w-[59px] shrink-0 flex-col items-center border-l border-[#848484] pt-[2px] pl-[2px]">
      <button aria-label="Sidebar Settings" className="flex h-[36px] w-9 items-center justify-center">
        <svg width="10" height="10" viewBox="0 0 10 10" stroke="#222">
          <path d="M0 .5h10M0 5.000h10M0 9.500h10" />
        </svg>
      </button>
      <button aria-label="Properties" className="mt-[10px] flex h-[34px] w-9 items-center justify-center rounded-md border border-[#858585] bg-[#939393]">
        <svg width="16" height="16" viewBox="0 0 16 16">
          <rect width="16" height="7" rx="3.500" fill="#b0421a" />
          <rect y="9" width="16" height="7" rx="3.500" fill="#b0421a" />
          <circle cx="12.500" cy="3.500" r="2.500" fill="#bbb" />
          <circle cx="3.500" cy="12.500" r="2.500" fill="#bbb" />
        </svg>
      </button>
      <button aria-label="Styles" className="mt-2 flex h-[34px] w-9 items-center justify-center">
        <svg width="20" height="20" viewBox="0 0 20 20">
          <text x="9" y="12" fontSize="14" fontWeight="700" fill="#222">A</text>
          <path d="M5 11l6-5 5 5-6 6z" fill="#b0b0b0" stroke="#333" />
          <path d="M3 9l6-5M1 19l5-5" stroke="#333" />
          <path d="M0 19l5-5" stroke="#b96a5c" strokeWidth="3" />
        </svg>
      </button>
      <button aria-label="Gallery" className="mt-2 flex h-[34px] w-9 items-center justify-center">
        <svg width="20" height="18" viewBox="0 0 20 18">
          <rect x=".5" y=".5" width="16" height="13" rx="1" fill="#973a8e" stroke="#2a2a2a" />
          <rect x="3.500" y="4.500" width="16" height="13" rx="1" fill="#973a8e" stroke="#2a2a2a" />
          <path d="M7 15l3-5 2 3 1-2 3 4z" fill="#c5b2c3" />
          <circle cx="15" cy="9" r="1" fill="#c5b2c3" />
        </svg>
      </button>
      <button aria-label="Navigator" className="mt-2 flex h-[34px] w-9 items-center justify-center">
        <svg width="20" height="20" viewBox="0 0 20 20">
          <circle cx="10" cy="10" r="9.500" fill="#34559f" stroke="#2a2a2a" />
          <path d="M5 15l3-7 4 4z" fill="#bbb" />
          <path d="M15 5L8 8l4 4z" fill="#a8323c" />
        </svg>
      </button>
      <button aria-label="Functions" className="mt-2 flex h-[34px] w-9 items-center justify-center text-[20px] leading-none text-[#222]">
        <span>
          f<sub className="text-[12px] font-bold">x</sub>
        </span>
      </button>
      <button aria-label="Hide sidebar" className="absolute top-[410px] left-0 flex h-[73px] w-[7px] items-center bg-[#727272]">
        <svg width="6" height="7" viewBox="0 0 6 7">
          <path d="M1 0l5 3.500L1 7z" fill="#b5b5b5" />
        </svg>
      </button>
    </aside>
  );
}

function StatusBar() {
  return (
    <footer className="flex h-[21px] shrink-0 items-center border-t border-[#868686] pt-px text-[12px] text-[#2e2e2e]">
      <span className="w-[271px] pl-[10px]">Sheet 8 of 10</span>
      <span className="h-[14px] w-[254px] border-l border-[#9a9a9a]" />
      <span className="flex h-[14px] flex-1 items-center border-l border-[#9a9a9a] pl-[8px]">PageStyle_Beans</span>
      <span className="flex h-[14px] w-[296px] items-center justify-center border-l border-[#9a9a9a]">English (Hong Kong)</span>
      <span className="h-[14px] w-[68px] border-l border-[#9a9a9a]" />
      <span className="flex h-[14px] w-[29px] items-center justify-center border-l border-[#9a9a9a]">
        <svg width="17" height="10" viewBox="0 0 17 10" fill="none">
          <path d="M.5 2.500h8v6h-8z" stroke={RUST} />
          <path d="M11 .5h5M11 9.500h5M13.500 0v10" stroke="#222" />
        </svg>
      </span>
      <span className="flex h-[14px] w-[29px] items-center justify-center border-l border-[#9a9a9a]">
        <svg width="14" height="13" viewBox="0 0 24 24" overflow="visible" stroke="#222">
          <path d="M9 3h6v9h4l-7 8-7-8h4z" fill="#5a7a1c" strokeWidth="2" />
          <path d="M4 22h16" strokeWidth="2" />
          <circle cx="20" cy="3" r="3" fill="#a01230" stroke="none" />
        </svg>
      </span>
      <span className="h-[14px] w-[29px] border-l border-[#9a9a9a]" />
      <span className="flex h-[14px] w-[358px] items-center justify-center border-l border-[#9a9a9a] pl-1">Average: 426.00; Sum: 426.00</span>
      <span className="flex h-[14px] w-[143px] items-center border-l border-[#9a9a9a] pl-[10px]">
        <svg width="128" height="12" viewBox="0 0 128 12">
          <path d="M0 6h8M117 6h9M121.500 2v8" stroke="#333" strokeWidth="2" />
          <path d="M14 6h96" stroke="#5e5e5e" strokeWidth="2" />
          <circle cx="62" cy="6" r="3.500" fill="#b0b0b0" stroke="#444" />
        </svg>
      </span>
      <span className="flex h-[14px] w-[49px] items-center border-l border-[#9a9a9a] pl-[7px]">100%</span>
    </footer>
  );
}

function MoveCopyDialog() {
  return (
    <div
      role="dialog"
      aria-labelledby="dialog-title"
      className="absolute top-[292px] left-[783px] w-[424px] rounded-t-xl bg-[#fafafa] text-[#3d3d3d] shadow-[0_3px_16px_4px_rgba(0,0,0,0.5)]"
    >
      <div className="grid h-[37px] grid-cols-[1fr_auto_1fr] items-center rounded-t-xl border-b border-[#c4c4c4] bg-[#ebebeb] px-[7px]">
        <h2 id="dialog-title" className="col-start-2 font-bold">Move/Copy Sheet</h2>
        <button aria-label="Close" className="flex size-[22px] items-center justify-center justify-self-end rounded-full bg-[#dadada]">
          <svg width="8" height="8" viewBox="0 0 8 8" stroke="#333" strokeWidth="1.500">
            <path d="M0 0l8 8M8 0L0 8" />
          </svg>
        </button>
      </div>
      <form className="flex flex-col px-2 pt-[7px] pb-2">
        <fieldset>
          <legend className="h-[20px] leading-[20px] font-bold">Action</legend>
          <div className="mt-[4px] grid h-[22px] grid-cols-2 items-center gap-x-2 pl-[16px]">
            {['Move', 'Copy'].map((mode) => (
              <label key={mode} className="flex items-center gap-[4px]">
                <input
                  type="radio"
                  name="mode"
                  defaultChecked={mode === 'Move'}
                  className="size-4 appearance-none rounded-full border border-[#c3c3c3] bg-white checked:border-[5px] checked:border-[#e95420]"
                />
                {mode}
              </label>
            ))}
          </div>
        </fieldset>
        <h3 className="mt-[11px] h-[20px] leading-[20px] font-bold">Location</h3>
        <div className="flex flex-col pl-[12px]">
          <label htmlFor="to-document" className="mt-[3px] h-[20px] leading-[20px]">To document</label>
          <div className="relative mt-[4px] flex items-center">
            <select id="to-document" className="h-[34px] w-full appearance-none rounded-md border border-[#c6c6c6] bg-white pl-[11px] outline-none">
              <option>workbook-with-sample-database (current document)</option>
            </select>
            <span className="pointer-events-none absolute right-[12px]">
              <ChevronDown />
            </span>
          </div>
          <span id="insert-before" className="mt-[11px] h-[20px] leading-[20px]">Insert before</span>
          <ul role="listbox" aria-labelledby="insert-before" className="mt-[4px] h-[178px] overflow-hidden border border-[#c4c4c4] bg-white text-black">
            {insertBefore.map((name, i) => (
              <li
                key={name}
                role="option"
                aria-selected={i === 0}
                className={`h-[23px] px-1 leading-[23px] ${i === 0 ? 'bg-[#e95420] text-white' : ''}`}
              >
                {name}
              </li>
            ))}
          </ul>
        </div>
        <label htmlFor="new-name" className="mt-[16px] h-[20px] leading-[20px] font-bold">New name</label>
        <input id="new-name" defaultValue="Beans" className="mt-[4px] ml-[12px] h-[34px] rounded-md border border-[#c6c6c6] bg-white px-2 text-black outline-none" />
        <div className="mt-[12px] flex gap-1">
          <button type="button" className="mr-auto h-[34px] w-[86px] rounded-md border border-[#c6c6c6] bg-white">Help</button>
          <button type="button" className="h-[34px] w-[86px] rounded-md border border-[#c6c6c6] bg-white">Cancel</button>
          <button type="button" className="h-[34px] w-[86px] rounded-md border border-[#c6c6c6] bg-white">OK</button>
        </div>
      </form>
    </div>
  );
}

export default function App() {
  return (
    <div className="relative flex h-screen flex-col overflow-hidden font-['Noto_Sans',sans-serif] text-[14px] leading-5">
      <TopBar />
      <div className="flex min-h-0 flex-1">
        <Dock />
        <main className="flex min-w-0 flex-1 flex-col bg-[#adadad]">
          <TitleBar />
          <nav aria-label="Menu bar" className="flex h-[25px] shrink-0 items-center gap-px border-b border-[#9a9a9a] pt-px pl-px text-[#2e2e2e]">
            {menus.map((menu) => (
              <button key={menu} className="px-2">
                {menu}
              </button>
            ))}
          </nav>
          <div className="flex h-[39px] shrink-0 items-center pb-0.5 pl-[3px]">
            <Toolbar tools={mainTools} />
          </div>
          <div className="flex h-[38px] shrink-0 items-center pl-1">
            <Combo label="Font Name" value="Calibri" width="w-[220px]" />
            <span className="w-[9px]" />
            <Combo label="Font Size" value="11 pt" width="w-[101px]" />
            <Toolbar tools={formatTools} />
          </div>
          <div className="flex min-h-0 flex-1">
            <div className="flex min-w-0 flex-1 flex-col">
              <FormulaBar />
              <InfoBar text="Help us make LibreOffice even better!" action="Get involved" width="w-[117px]" />
              <InfoBar text="Your donations support our worldwide community." action="Donate" width="w-[83px]" />
              <SheetGrid />
              <div className="flex h-[12px] shrink-0 items-center pl-1">
                <span className="h-[6px] w-[836px] rounded-full bg-[#606060]" />
                <span className="mr-[12px] ml-auto flex h-full w-[5px] items-center justify-center bg-[#858585]">
                  <span className="h-[6px] w-px bg-black" />
                </span>
              </div>
              <SheetTabs />
            </div>
            <SideBar />
          </div>
          <StatusBar />
        </main>
      </div>
      <MoveCopyDialog />
      <svg width="18" height="26" viewBox="0 0 18 26" className="absolute top-[880px] left-[999px]">
        <path d="M1.500 1.500v18l4-4 3 8 3.500-1.500-3-7.500h6.500z" fill="#2b2b2b" stroke="#fff" strokeWidth="1.500" />
      </svg>
    </div>
  );
}
